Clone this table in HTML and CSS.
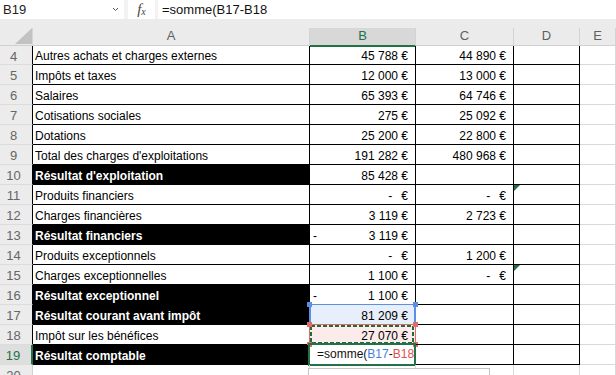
FILE: index.html
```html
<!DOCTYPE html>
<html lang="fr">
<head>
<meta charset="utf-8">
<title>Compte de résultat</title>
<link rel="stylesheet" href="styles.css">
</head>
<body>
<div class="app">
  <div class="fbar">
    <div class="namebox"><span>B19</span>
      <svg class="chev" width="7" height="5" viewBox="0 0 7 5"><path d="M1 1 L3.5 3.5 L6 1" fill="none" stroke="#555" stroke-width="1"/></svg>
    </div>
    <div class="fxbox"><span class="fx-f">f</span><span class="fx-x">x</span></div>
    <div class="finput">=somme(B17-B18</div>
  </div>
  <div class="band"></div>
  <div class="colhead">
    <div class="corner"><svg width="17" height="16" viewBox="0 0 17 16"><polygon points="17,0 17,16 0,16" fill="#c2c2c2"/></svg></div>
    <div class="ch">A</div>
    <div class="ch sel">B</div>
    <div class="ch">C</div>
    <div class="ch">D</div>
    <div class="ch">E</div>
  </div>
  <div class="sheet">
    <div class="row first"><div class="rh">4</div><div class="c a">Autres achats et charges externes</div><div class="c n">45 788 €</div><div class="c n">44 890 €</div><div class="c d"></div><div class="c e"></div></div>
    <div class="row"><div class="rh">5</div><div class="c a">Impôts et taxes</div><div class="c n">12 000 €</div><div class="c n">13 000 €</div><div class="c d"></div><div class="c e"></div></div>
    <div class="row"><div class="rh">6</div><div class="c a">Salaires</div><div class="c n">65 393 €</div><div class="c n">64 746 €</div><div class="c d"></div><div class="c e"></div></div>
    <div class="row"><div class="rh">7</div><div class="c a">Cotisations sociales</div><div class="c n">275 €</div><div class="c n">25 092 €</div><div class="c d"></div><div class="c e"></div></div>
    <div class="row"><div class="rh">8</div><div class="c a">Dotations</div><div class="c n">25 200 €</div><div class="c n">22 800 €</div><div class="c d"></div><div class="c e"></div></div>
    <div class="row"><div class="rh">9</div><div class="c a">Total des charges d'exploitations</div><div class="c n">191 282 €</div><div class="c n">480 968 €</div><div class="c d"></div><div class="c e"></div></div>
    <div class="row"><div class="rh">10</div><div class="c a blk">Résultat d'exploitation</div><div class="c n">85 428 €</div><div class="c n"></div><div class="c d"></div><div class="c e"></div></div>
    <div class="row"><div class="rh">11</div><div class="c a">Produits financiers</div><div class="c n"><span class="dash">-</span><span>€</span></div><div class="c n"><span class="dash">-</span><span>€</span></div><div class="c d tri"></div><div class="c e"></div></div>
    <div class="row"><div class="rh">12</div><div class="c a">Charges financières</div><div class="c n">3 119 €</div><div class="c n">2 723 €</div><div class="c d"></div><div class="c e"></div></div>
    <div class="row"><div class="rh">13</div><div class="c a blk">Résultat financiers</div><div class="c n neg"><span>-</span><span>3 119 €</span></div><div class="c n"></div><div class="c d"></div><div class="c e"></div></div>
    <div class="row"><div class="rh">14</div><div class="c a">Produits exceptionnels</div><div class="c n"><span class="dash">-</span><span>€</span></div><div class="c n">1 200 €</div><div class="c d"></div><div class="c e"></div></div>
    <div class="row"><div class="rh">15</div><div class="c a">Charges exceptionnelles</div><div class="c n">1 100 €</div><div class="c n"><span class="dash">-</span><span>€</span></div><div class="c d tri"></div><div class="c e"></div></div>
    <div class="row"><div class="rh">16</div><div class="c a blk">Résultat exceptionnel</div><div class="c n neg"><span>-</span><span>1 100 €</span></div><div class="c n"></div><div class="c d"></div><div class="c e"></div></div>
    <div class="row"><div class="rh">17</div><div class="c a blk">Résultat courant avant impôt</div><div class="c n ref-blue">81 209 €<i class="box-blue"></i><i class="hd hb tl"></i><i class="hd hb tr"></i></div><div class="c n"></div><div class="c d"></div><div class="c e"></div></div>
    <div class="row"><div class="rh">18</div><div class="c a">Impôt sur les bénéfices</div><div class="c n ref-red">27 070 €<i class="box-red"></i><svg class="ants" width="104" height="19" viewBox="0 0 104 19"><rect x="1" y="1" width="102" height="17" fill="none" stroke="#1f6b3f" stroke-width="2" stroke-dasharray="4 2"/></svg><i class="hd hr tl"></i><i class="hd hr tr"></i><i class="hd hr bl"></i><i class="hd hr br"></i></div><div class="c n"></div><div class="c d"></div><div class="c e"></div></div>
    <div class="row active"><div class="rh">19</div><div class="c a blk">Résultat comptable</div><div class="c edit">=somme(<span class="rb">B17</span>-<span class="rr">B18</span><span class="caret"></span><i class="box-edit"></i></div><div class="c n"></div><div class="c d"></div><div class="c e"></div></div>
    <div class="row empty"><div class="rh">20</div><div class="c a"></div><div class="c n"></div><div class="c n"></div><div class="c d"></div><div class="c e"></div></div>
  </div>
  <div class="tip"></div>
</div>
</body>
</html>
```
FILE: styles.css
```css
html, body {
  margin: 0;
  padding: 0;
  background: #ffffff;
  overflow: hidden;
}
.app {
  position: relative;
  width: 616px;
  height: 375px;
  overflow: hidden;
  font-family: "Liberation Sans", Arial, sans-serif;
  color: #000;
}

/* formula bar */
.fbar {
  display: flex;
  height: 19px;
  background: #f3f3f3;
}
.namebox {
  width: 121px;
  padding-left: 3px;
  background: #fff;
  display: flex;
  align-items: center;
  justify-content: space-between;
  font-size: 13px;
  color: #222;
}
.chev {
  margin-right: 5px;
}
.fxbox {
  margin-left: 4px;
  width: 27px;
  background: #fff;
  display: flex;
  align-items: center;
  justify-content: center;
  font-family: "Liberation Serif", "Times New Roman", serif;
  font-style: italic;
  color: #444;
}
.fx-f {
  font-size: 15px;
}
.fx-x {
  font-size: 10px;
  margin-top: 3px;
}
.finput {
  margin-left: 3px;
  flex: 1;
  background: #fff;
  padding-left: 4px;
  display: flex;
  align-items: center;
  font-size: 13px;
  color: #111;
}

/* column headers */
.band {
  height: 9px;
  background: #ebebeb;
}
.colhead {
  display: grid;
  grid-template-columns: 33px 277px 106px 98px 66px 1fr;
  height: 18px;
  background: #ebebeb;
  box-sizing: border-box;
  border-bottom: 1px solid #d0d0d0;
}
.corner {
  display: flex;
  justify-content: flex-end;
  align-items: flex-start;
  border-right: 1px solid #d6d6d6;
}
.ch {
  display: flex;
  align-items: center;
  justify-content: center;
  padding-bottom: 3px;
  box-sizing: border-box;
  font-size: 13px;
  color: #5f5f5f;
  border-right: 1px solid #d3d3d3;
}
.ch.sel {
  background: #d8d8d8;
  color: #217346;
  border-bottom: 2px solid #217346;
  margin-bottom: -1px;
  padding-bottom: 2px;
}

/* sheet */
.row {
  display: grid;
  grid-template-columns: 33px 277px 106px 98px 66px 1fr;
  height: 20px;
}
.row.first {
  height: 19px;
}
.rh {
  background: #ececec;
  color: #666;
  font-size: 13px;
  display: flex;
  align-items: center;
  justify-content: center;
  padding-right: 5px;
  padding-top: 2px;
  box-sizing: border-box;
  border-bottom: 1px solid #dcdcdc;
  border-right: 1px solid #000;
}
.row.active .rh {
  background: #dedede;
  color: #217346;
  border-right: 2px solid #217346;
}
.row.empty .rh {
  border-right-color: #d0d0d0;
}
.c {
  position: relative;
  box-sizing: border-box;
  border-right: 1px solid #000;
  border-bottom: 1px solid #000;
  font-size: 12px;
  line-height: 15px;
  display: flex;
  align-items: flex-end;
  padding-bottom: 0;
  white-space: nowrap;
}
.c.e {
  border-right-color: #d9d9d9;
  border-bottom-color: #d9d9d9;
}
.row.empty .c {
  border-right-color: #d9d9d9;
  border-bottom-color: #d9d9d9;
}
.a {
  padding-left: 2px;
}
.blk {
  background: #000;
  color: #fff;
  font-weight: bold;
}
.n {
  justify-content: flex-end;
  padding-right: 7px;
}
.n.neg {
  justify-content: space-between;
  padding-left: 3px;
}
.dash {
  margin-right: 9px;
}
.tri::before {
  content: "";
  position: absolute;
  left: 0;
  top: 0;
  border-top: 6px solid #1e7145;
  border-right: 6px solid transparent;
}

/* reference highlights */
.ref-blue {
  background: #e8effc;
}
.ref-red {
  background: #fbebea;
}
.box-blue, .box-red, .box-edit {
  position: absolute;
  box-sizing: border-box;
}
.box-blue {
  top: -1px;
  left: -1px;
  right: -1px;
  bottom: -1px;
  border: 1px solid #5b8ee6;
  border-left-width: 2px;
  border-right-width: 2px;
}
.box-red {
  top: -1px;
  left: -1px;
  right: -1px;
  bottom: -1px;
  border: 1px solid #e26b66;
}
.ants {
  position: absolute;
  left: 0;
  top: 0;
}
.hd {
  position: absolute;
  width: 5px;
  height: 5px;
}
.hb { background: #5b8ee6; }
.hr { background: #e26b66; }
.tl { left: -3px; top: -3px; }
.tr { right: -3px; top: -3px; }
.bl { left: -3px; bottom: -3px; }
.br { right: -3px; bottom: -3px; }

.edit {
  align-items: flex-start;
  padding-left: 7px;
  padding-top: 2px;
  overflow: visible;
  color: #111;
}
.rb { color: #3f7fe0; }
.rr { color: #e0504c; }
.caret {
  display: inline-block;
  width: 1px;
  height: 14px;
  background: #000;
}
.box-edit {
  top: -2px;
  left: -2px;
  right: -1px;
  bottom: -2px;
  border: 2px solid #217346;
}

.tip {
  position: absolute;
  left: 308px;
  top: 368px;
  width: 182px;
  height: 20px;
  box-sizing: border-box;
  border: 1px solid #c4c4c4;
  background: #fff;
}
```
